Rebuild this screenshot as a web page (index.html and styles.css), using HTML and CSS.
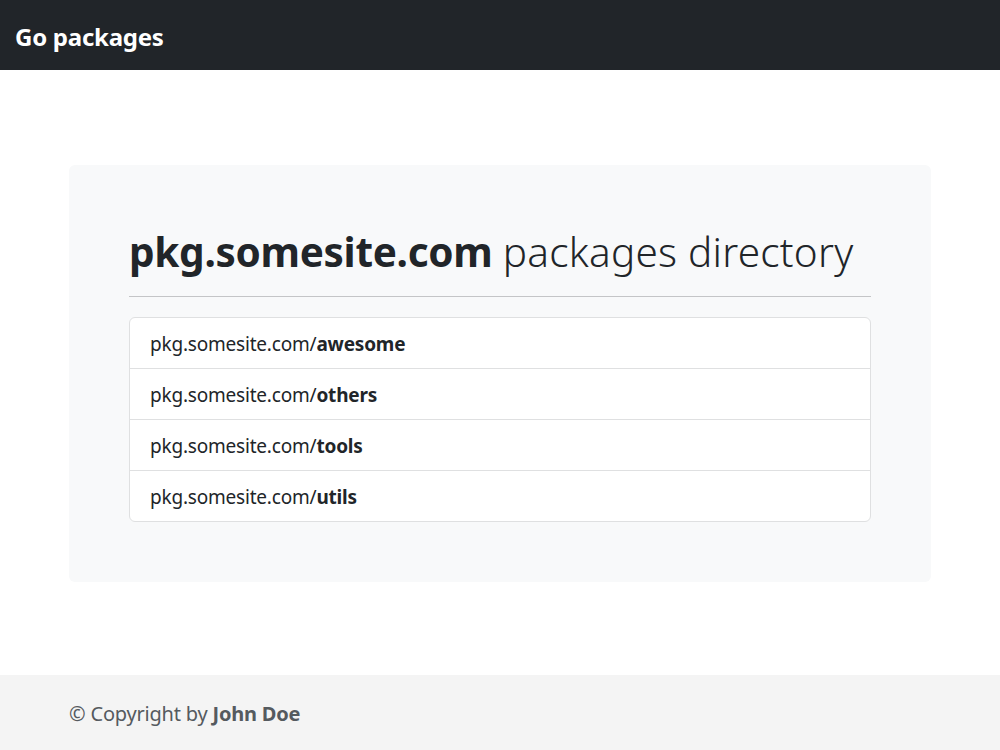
FILE: index.html
```html
<!DOCTYPE html>
<html lang="en">
<head>
<meta charset="utf-8">
<title>Go packages</title>
<link rel="stylesheet" href="styles.css">
</head>
<body>
<nav class="navbar">
  <a class="brand" href="#">Go packages</a>
</nav>
<main class="main">
  <div class="container">
    <section class="jumbo">
      <h1 class="title"><strong>pkg.somesite.com</strong> <span class="light">packages directory</span></h1>
      <hr class="rule">
      <ul class="list">
        <li class="item"><a href="#">pkg.somesite.com/<strong>awesome</strong></a></li>
        <li class="item"><a href="#">pkg.somesite.com/<strong>others</strong></a></li>
        <li class="item"><a href="#">pkg.somesite.com/<strong>tools</strong></a></li>
        <li class="item"><a href="#">pkg.somesite.com/<strong>utils</strong></a></li>
      </ul>
    </section>
  </div>
</main>
<footer class="footer">
  <div class="container">
    <p class="copy">© Copyright by <strong>John Doe</strong></p>
  </div>
</footer>
</body>
</html>
```

FILE: styles.css
```css
* { box-sizing: border-box; }
html, body { margin: 0; padding: 0; }
body {
  font-family: "Noto Sans", "Open Sans", sans-serif;
  color: #212529;
  background: #fff;
  min-height: 100vh;
  display: flex;
  flex-direction: column;
}
.navbar {
  background: #212529;
  height: 70px;
  display: flex;
  align-items: center;
  padding: 3px 0 0 15px;
}
.brand {
  color: #fff;
  text-decoration: none;
  font-weight: 700;
  font-size: 24px;
  letter-spacing: -0.25px;
}
.main {
  flex: 1;
  padding-top: 95px;
}
.container {
  width: 862px;
  margin: 0 auto;
}
.jumbo {
  background: #f8f9fa;
  border-radius: 6px;
  padding: 60px;
}
.title {
  margin: 0;
  font-size: 40.5px;
  font-weight: 300;
  line-height: 54px;
  letter-spacing: -0.3px;
}
.title strong { font-weight: 700; }
.title .light { letter-spacing: 0.25px; }
.rule {
  border: 0;
  border-top: 1px solid #c4c5c7;
  margin: 17px 0 20px;
}
.list {
  list-style: none;
  margin: 0;
  padding: 0;
  background: #fff;
  border: 1px solid #dfe0e1;
  border-radius: 6px;
}
.item {
  height: 51px;
  display: flex;
  align-items: center;
  padding: 1px 20px 0;
  border-top: 1px solid #dfe0e1;
  font-size: 19px;
}
.item:first-child { border-top: 0; height: 50px; }
.item a {
  color: #212529;
  text-decoration: none;
  letter-spacing: -0.2px;
}
.item strong { font-weight: 700; }
.footer {
  background: #f4f4f4;
  height: 75px;
  display: flex;
  align-items: center;
  padding-top: 1px;
}
.copy {
  margin: 0;
  font-size: 20px;
  color: #555a5f;
  letter-spacing: -0.2px;
}
.copy strong { font-weight: 700; }
```
